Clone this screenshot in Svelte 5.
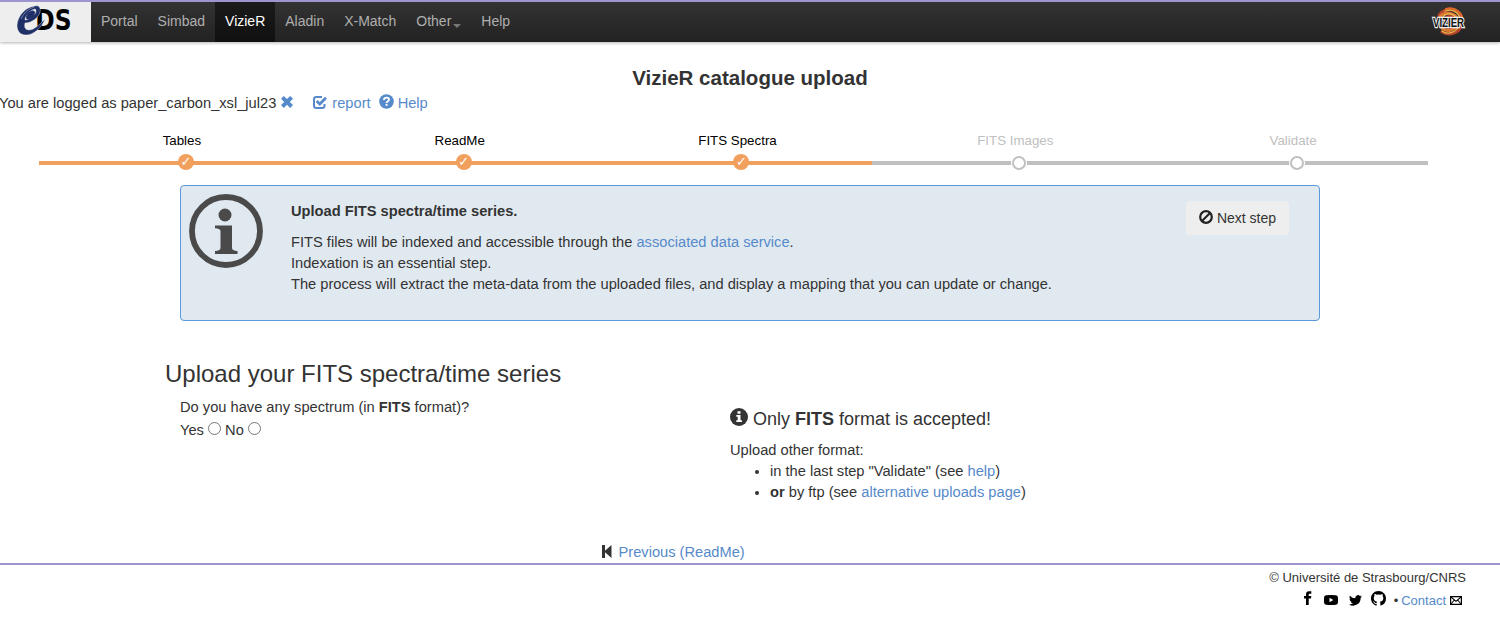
<script>
  const nav = ['Portal', 'Simbad', 'VizieR', 'Aladin', 'X-Match', 'Other', 'Help'];
  const steps = [
    { name: 'Tables', done: true },
    { name: 'ReadMe', done: true },
    { name: 'FITS Spectra', done: true },
    { name: 'FITS Images', done: false },
    { name: 'Validate', done: false }
  ];
</script>

<header>
  <a class="brand" href="#cds" aria-label="CDS">
    <svg width="70" height="38" viewBox="0 0 70 38">
      <text x="17" y="22.4" transform="scale(1.25 1.25)" font-family="DejaVu Sans" font-weight="bold" font-size="23" textLength="29" lengthAdjust="spacingAndGlyphs">DS</text>
      <path fill="#1f3068" fill-rule="evenodd" stroke="#eee" stroke-width=".4" d="M21 4C25 3 27 6 26 10C25 16 17 21 11 21C10 25 11 28 15 28C20 28 25 23 31 17C28 25 20 33 12 33C6 33 3 29 3 23C4 13 12 5 21 4ZM21 7C16 8 11 14 11 18C15 18 22 13 22 9Q22 7 21 7Z" />
      <ellipse cx="16.5" cy="13" rx="5.5" ry="3.2" transform="rotate(-45 16.5 13)" fill="#1f3068" />
      <path d="M20 5Q11 8 7 17" fill="none" stroke="#8d97b6" stroke-width=".7" />
    </svg>
  </a>
  <nav>
    {#each nav as item}
      <a href="#{item}" class:active={item === 'VizieR'}>{item}{#if item === 'Other'}<i class="caret"></i>{/if}</a>
    {/each}
  </nav>
  <svg class="vizier" width="40" height="34" viewBox="-3 0 40 34">
    <g fill="none" stroke-linecap="round">
      <path stroke="#b8442b" stroke-width="3" d="M6 10C12 1 29 4 29 16C29 27 18 32 9 27" />
      <path stroke="#dc7830" stroke-width="3" d="M5 16C8 4 24 7 25 16C25 26 13 28 8 22" />
      <path stroke="#e06a2a" stroke-width="2" d="M13 4C22 1 30 8 30 17" />
      <path stroke="#e8b84e" stroke-width="1.3" d="M12 6C20 3 26 8 27 14M9 26C15 31 25 26 26 20M9 13C14 6 22 9 24 15" />
      <path stroke="#b93c28" stroke-width="2.4" d="M12 14C15 9 22 11 22 17S15 25 12 20" />
    </g>
    <text x="0" y="17.2" transform="scale(1 1.3)" font-family="Liberation Sans" font-weight="bold" font-size="9.6" textLength="31" lengthAdjust="spacingAndGlyphs" fill="#111" stroke="#eee" stroke-width="1.8" paint-order="stroke">VIZIER</text>
  </svg>
</header>

<h1>VizieR catalogue upload</h1>
<div class="login">
  <span>You are logged as paper_carbon_xsl_jul23</span>
  <a class="x" href="#logout" aria-label="Log out"><svg width="14" height="14" viewBox="0 0 14 14"><path d="M3.8 1L7 4.1L10.2 1L13 3.7L9.8 6.9L13 10.1L10.2 12.9L7 9.7L3.8 12.9L1 10.1L4.2 6.9L1 3.7Z" fill="currentColor" /></svg></a>
  <a class="report" href="#report"><svg width="16" height="15" viewBox="0 0 16 15"><path d="M10 2H4.3Q2 2 2 4.3V10.7Q2 13 4.3 13H10.2Q12.5 13 12.5 10.7V9" fill="none" stroke="currentColor" stroke-width="2" /><path d="M4.6 6L7.8 9L14 2.7" fill="none" stroke="currentColor" stroke-width="2.7" /></svg>report</a>
  <a class="help" href="#help"><svg width="15" height="15" viewBox="0 0 15 15"><circle cx="7.5" cy="7.5" r="7.3" fill="currentColor" /><path d="M5 5.9Q5 3.6 7.6 3.6Q10 3.6 10 5.6Q10 6.8 8.6 7.5Q7.6 8 7.6 9" fill="none" stroke="#fff" stroke-width="1.9" /><path d="M6.6 9.9h2v1.8h-2z" fill="#fff" /></svg>Help</a>
</div>

<ol class="steps">
  {#each steps as step}
    <li class:done={step.done}>
      <span>{step.name}</span>
      <b>{#if step.done}✓{/if}</b>
    </li>
  {/each}
</ol>

<section class="info">
  <svg class="big" width="74" height="74" viewBox="0 0 74 74">
    <circle cx="37" cy="37" r="34" fill="none" stroke="#4a4a4a" stroke-width="5.8" />
    <circle cx="36" cy="21" r="6.5" fill="#4a4a4a" />
    <path d="M26 31.5H43V54Q43 56.5 48.5 57V60H26V57Q31.5 56.5 31.5 54V37Q31.5 34.7 26 34.3Z" fill="#4a4a4a" />
  </svg>
  <div class="copy">
    <p><b>Upload FITS spectra/time series.</b></p>
    <p>FITS files will be indexed and accessible through the <a href="#service">associated data service</a>.<br />Indexation is an essential step.<br />The process will extract the meta-data from the uploaded files, and display a mapping that you can update or change.</p>
  </div>
  <button><svg width="14" height="14" viewBox="0 0 14 14"><g fill="none" stroke="#222" stroke-width="2.2"><circle cx="7" cy="7" r="5.8" /><path d="M3 11L11 3" /></g></svg>Next step</button>
</section>

<h2>Upload your FITS spectra/time series</h2>
<div class="cols">
  <div class="question">
    <div>Do you have any spectrum (in <b>FITS</b> format)?</div>
    <div class="radios"><label>Yes <input type="radio" name="spectrum" /></label> <label>No <input type="radio" name="spectrum" /></label></div>
  </div>
  <div class="formats">
    <h3><svg width="18" height="18" viewBox="0 0 18 18"><circle cx="9" cy="9" r="9" fill="#333" /><path d="M7.5 3.3h3v2.4h-3zM6.3 7h4.2v5.2h1.5V14H6.3v-1.8h1.4V8.8H6.3z" fill="#fff" /></svg><span>Only <b>FITS</b> format is accepted!</span></h3>
    <div>Upload other format:</div>
    <ul>
      <li>in the last step "Validate" (see <a href="#help">help</a>)</li>
      <li><b>or</b> by ftp (see <a href="#alt">alternative uploads page</a>)</li>
    </ul>
  </div>
</div>
<div class="previous"><svg width="10" height="13" viewBox="0 0 10 13"><path d="M0 0h3v5.7L9.5 0v13L3 7.3V13H0z" fill="#333" /></svg><a href="#readme">Previous (ReadMe)</a></div>

<footer>
  <div>© Université de Strasbourg/CNRS</div>
  <div class="social">
    <svg class="fb" width="8" height="14" viewBox="0 0 8 14"><path d="M2 14V7.5H0V5h2V3.4Q2 .3 5 .3h2.3v2.4H5.7Q4.7 2.7 4.7 3.7V5h2.6L7 7.5H4.7V14z" /></svg>
    <svg class="yt" width="14" height="10" viewBox="0 0 14 10"><path fill-rule="evenodd" d="M2 .3Q7-.3 12 .3Q14 .4 14 3V7Q14 9.6 12 9.7Q7 10.3 2 9.7Q0 9.6 0 7V3Q0 .4 2 .3ZM5.5 2.8V7.2L9.3 5Z" /></svg>
    <svg class="tw" width="13" height="11" viewBox="0 0 24 20"><path d="M24 2.4a10 10 0 0 1-2.8.8A5 5 0 0 0 23.3.4a10 10 0 0 1-3.1 1.2A4.9 4.9 0 0 0 11.8 6 14 14 0 0 1 1.7 1a4.9 4.9 0 0 0 1.5 6.5A5 5 0 0 1 1 6.9a4.9 4.9 0 0 0 3.9 4.9 5 5 0 0 1-2.2.1 4.9 4.9 0 0 0 4.6 3.4A10 10 0 0 1 0 17.3 14 14 0 0 0 21.5 4.9 10 10 0 0 0 24 2.4z" /></svg>
    <svg class="gh" width="15" height="15" viewBox="0 0 16 16"><path d="M8 0C3.58 0 0 3.58 0 8c0 3.54 2.29 6.53 5.47 7.59.4.07.55-.17.55-.38v-1.49c-2.01.37-2.53-.49-2.69-.94-.09-.23-.48-.94-.82-1.13-.28-.15-.68-.52-.01-.53.63-.01 1.08.58 1.23.82.72 1.21 1.87.87 2.33.66.07-.52.28-.87.51-1.07-1.78-.2-3.64-.89-3.64-3.95 0-.87.31-1.59.82-2.15-.08-.2-.36-1.02.08-2.12 0 0 .67-.21 2.2.82a7.6 7.6 0 0 1 4 0c1.53-1.04 2.2-.82 2.2-.82.44 1.1.16 1.92.08 2.12.51.56.82 1.27.82 2.15 0 3.07-1.87 3.75-3.65 3.95.29.25.54.73.54 1.48v2.2c0 .21.15.46.55.38A8 8 0 0 0 16 8c0-4.42-3.58-8-8-8z" /></svg>
    <span>•</span><a href="#contact">Contact</a>
    <svg class="mail" width="12" height="9" viewBox="0 0 12 9"><path d="M.6.6h10.8v7.8H.6z" fill="#fff" stroke="#000" stroke-width="1.2" /><path d="M1 1L6 5.3L11 1M1 8L4.3 4M11 8L7.7 4" fill="none" stroke="#000" stroke-width="1.1" /></svg>
  </div>
</footer>

<style>
  :global(body) { margin: 0; background: #fff; color: #333; font: 14.667px/21px "Liberation Sans", Arial, sans-serif; overflow: hidden; }
  a { color: #568aca; text-decoration: none; }
  header { height: 40px; border-top: 2px solid #9c95d0; display: flex; background: linear-gradient(#333, #222); box-shadow: 0 1px 3px rgba(0,0,0,.3); }
  .brand { width: 91px; background: #eee; }
  .brand svg { display: block; margin: 0 0 0 14px; }
  nav { display: flex; font-size: 14px; }
  nav a { padding: 9px 10px 0; color: #afafaf; height: 31px; line-height: 20px; }
  nav .active { color: #fff; background: linear-gradient(#1b1b1b, #101010); }
  .caret { display: inline-block; border: 4px solid transparent; border-top-color: #777; border-bottom: 0; margin-left: 2px; vertical-align: -2px; }
  .vizier { margin: 3px 30px 0 auto; }
  h1 { margin: 22px 0 0; text-align: center; font-size: 20.53px; line-height: 28px; }
  .login { display: flex; height: 20px; padding-top: 1px; margin-left: -1px; }
  .login svg { flex: none; }
  .x svg { display: block; margin: 2px 0 0 4px; }
  .report, .help { display: flex; }
  .report { margin-left: 18px; }
  .report svg { margin: 2px 4px 0 0; }
  .help { margin-left: 8px; }
  .help svg { margin: 1px 4px 0 0; }
  .steps { list-style: none; display: flex; margin: 18px 72px 0 39px; padding: 0; height: 34px; font-size: 13.33px; }
  .steps li { flex: 1; height: 30px; border-bottom: 4px solid silver; color: silver; text-align: center; line-height: 20px; position: relative; }
  .steps li.done { color: #000; border-color: #f19f5c; }
  .steps span { display: block; padding-left: 8px; }
  .steps b { position: absolute; left: calc(50% + 1px); top: 25px; box-sizing: border-box; width: 14px; height: 14px; border: 2px solid silver; border-radius: 50%; background: #fff; box-shadow: 0 0 0 1px #fff; }
  .steps .done b { left: 50%; top: 23px; width: 16px; height: 16px; border: 0; background: #f19f5c; color: #fff; font: bold 13px/15px "DejaVu Sans", sans-serif; box-shadow: none; }
  .info { box-sizing: border-box; height: 136px; margin: 20px 180px 0; display: flex; border: 1px solid #5b98dc; border-radius: 4px; background: #e1e9f0; }
  .big { margin: 8px 28px 0 8px; }
  .copy { padding-top: 15px; }
  .copy p { margin: 0 0 10px; }
  button { margin: 15px 30px 0 auto; width: 103px; height: 34px; padding: 0 0 1px; border: 0; border-radius: 4px; background: #eee; color: #333; font: 14px "Liberation Sans", Arial, sans-serif; display: flex; align-items: center; justify-content: center; gap: 4px; }
  button svg { margin-top: -2px; }
  h2 { margin: 39px 0 0 165px; font-size: 24px; line-height: 28px; font-weight: 400; }
  .cols { display: grid; grid-template-columns: 550px 1fr; margin: 9px 0 0 180px; }
  .radios { margin-top: 2px; }
  input { width: 13px; height: 13px; margin: 0; vertical-align: 0; }
  h3 { margin: 12px 0 10px; font-size: 18px; line-height: 20px; font-weight: 400; display: flex; gap: 5px; height: 21px; }
  h3 svg { margin-top: -1px; }
  ul { margin: 0; padding-left: 40px; }
  .previous { margin: 39px 0 0 602px; height: 20px; display: flex; gap: 6.5px; }
  .previous svg { margin-top: 3px; }
  footer { margin-top: 1px; border-top: 2px solid #9c95d0; padding: 3px 34px 0 0; font-size: 13px; line-height: 20px; text-align: right; }
  .social { display: flex; justify-content: flex-end; align-items: center; padding: 3px 4px 0 0; }
  .fb { margin: -7px 12px 0 0; }
  .yt { margin: -3px 11px 0 0; }
  .tw { margin: -1px 9px 0 0; }
  .gh { margin: -5px 8px 0 0; }
  .social span { margin-right: 3px; }
  .mail { margin: -2px 0 0 4px; }
</style>
